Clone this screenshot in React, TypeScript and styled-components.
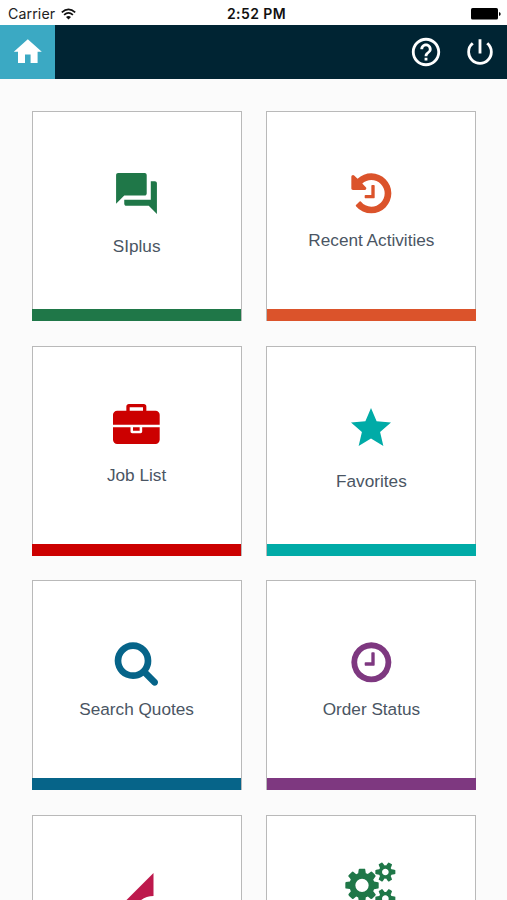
import React from "react";
import styled, { createGlobalStyle } from "styled-components";
import { MdForum, MdHelpOutline, MdHome, MdPowerSettingsNew, MdStar } from "react-icons/md";

const GlobalStyle = createGlobalStyle`
  body { margin: 0; background: #fbfbfb; overflow: hidden; }
`;

const Screen = styled.div`
  width: 507px;
  height: 900px;
  overflow: hidden;
  background: #fbfbfb;
  font-family: "Liberation Sans", Arial, sans-serif;
`;

const StatusBar = styled.div`
  height: 25px;
  box-sizing: border-box;
  padding: 2px 6px 0 8px;
  display: grid;
  grid-template-columns: 219px 1fr auto;
  align-items: center;
  background: #fff;
  color: #111;
  font-family: Inter, sans-serif;
  line-height: 22px;
`;

const Carrier = styled.div`
  display: flex;
  align-items: center;
  gap: 6px;
  color: #222;
  font-size: 14.2px;
  letter-spacing: 0.1px;
`;

const Time = styled.div`
  font-weight: 600;
  font-size: 14px;
  letter-spacing: 0.4px;
`;

const BatterySlot = styled.div`
  display: flex;
  justify-content: flex-end;
`;

const NavBar = styled.header`
  height: 54px;
  display: flex;
  justify-content: space-between;
  background: #002433;
  color: #fff;
`;

const HomeButton = styled.button`
  width: 55px;
  height: 54px;
  padding: 0;
  border: 0;
  display: flex;
  align-items: center;
  justify-content: center;
  background: #3ba9c3;
  color: #fff;
`;

const NavActions = styled.div`
  display: flex;
  align-items: center;
  gap: 20px;
  padding-right: 10px;
`;

const Grid = styled.main`
  display: grid;
  grid-template-columns: 210px 210px;
  grid-auto-rows: 210px;
  gap: 24.5px 24.8px;
  padding: 32px 0 0 31.6px;
`;

const Card = styled.section<{ $accent: string; $top: number }>`
  box-sizing: border-box;
  border: 1px solid #b9b9b9;
  border-bottom: 0;
  padding-top: ${(p) => p.$top}px;
  display: flex;
  flex-direction: column;
  align-items: center;
  background: #fff;
  color: ${(p) => p.$accent};

  svg { display: block; flex: none; overflow: visible; }
`;

const AccentBar = styled.div`
  align-self: stretch;
  height: 12px;
  margin: auto -0.5px 0;
  background: currentColor;
`;

const Label = styled.div<{ $gap: number }>`
  margin-top: ${(p) => p.$gap}px;
  font-size: 17.2px;
  line-height: 20px;
  white-space: nowrap;
  color: #4a5563;
`;

const HISTORY =
  "M1664 896q0 156-61 298t-164 245-245 164-298 61q-172 0-327-72.5t-264-204.5q-7-10-6.5-22.5t8.5-20.5l137-138q10-9 25-9 16 2 23 12 73 95 179 147t225 52q104 0 198.5-40.5t163.5-109.5 109.5-163.5 40.5-198.5-40.5-198.5-109.5-163.5-163.5-109.5-198.5-40.5q-98 0-188 35.5t-160 101.5l137 138q31 30 14 69-17 40-59 40h-448q-26 0-45-19t-19-45v-448q0-42 40-59 39-17 69 14l130 129q107-101 244.5-156.5t284.5-55.5q156 0 298 61t245 164 164 245 61 298zm-640-288v448q0 14-9 23t-23 9h-320q-14 0-23-9t-9-23v-64q0-14 9-23t23-9h224v-352q0-14 9-23t23-9h64q14 0 23 9t9 23z";
const CLOCK =
  "M1024 544v448q0 14-9 23t-23 9h-320q-14 0-23-9t-9-23v-64q0-14 9-23t23-9h224v-352q0-14 9-23t23-9h64q14 0 23 9t9 23zm416 352q0-148-73-273t-198-198-273-73-273 73-198 198-73 273 73 273 198 198 273 73 273-73 198-198 73-273zm224 0q0 209-103 385.5t-279.5 279.5-385.5 103-385.5-103-279.5-279.5-103-385.5 103-385.5 279.5-279.5 385.5-103 385.5 103 279.5 279.5 103 385.5z";
const SEARCH =
  "M1216 832q0-185-131.5-316.5t-316.5-131.5-316.5 131.5-131.5 316.5 131.5 316.5 316.5 131.5 316.5-131.5 131.5-316.5zm512 832q0 52-38 90t-90 38q-54 0-90-38l-343-342q-179 124-399 124-143 0-273.5-55.5t-225-150-150-225-55.5-273.5 55.5-273.5 150-225 225-150 273.5-55.5 273.5 55.5 225 150 150 225 55.5 273.5q0 220-124 399l343 343q37 37 37 90z";
const BRIEFCASE =
  "M640 256h512v-128h-512v128zm1152 640v480q0 66-47 113t-113 47h-1472q-66 0-113-47t-47-113v-480h672v160q0 26 19 45t45 19h320q26 0 45-19t19-45v-160h672zm-768 0v128h-256v-128h256zm768-480v384h-1792v-384q0-66 47-113t113-47h352v-160q0-40 28-68t68-28h576q40 0 68 28t28 68v160h352q66 0 113 47t47 113z";
const COGS =
  "M832 896q0-106-75-181t-181-75-181 75-75 181 75 181 181 75 181-75 75-181zm768 512q0-52-38-90t-90-38-90 38-38 90q0 53 37.5 90.5t90.5 37.5 90.5-37.5 37.5-90.5zm0-1024q0-52-38-90t-90-38-90 38-38 90q0 53 37.5 90.5t90.5 37.5 90.5-37.5 37.5-90.5zm-384 421v185q0 10-7 19.5t-16 10.5l-155 24q-11 35-32 76 34 48 90 115 7 11 7 20 0 12-7 19-23 30-82.5 89.5t-78.5 59.5q-11 0-21-7l-115-90q-37 19-77 31-11 108-23 155-7 24-30 24h-186q-11 0-20-7.5t-10-17.5l-23-153q-34-10-75-31l-118 89q-7 7-20 7-11 0-21-8-144-133-144-160 0-9 7-19 10-14 41-53t47-61q-23-44-35-82l-152-24q-10-1-17-9.5t-7-19.5v-185q0-10 7-19.5t16-10.5l155-24q11-35 32-76-34-48-90-115-7-11-7-20 0-12 7-20 22-30 82-89t79-59q11 0 21 7l115 90q34-18 77-32 11-108 23-154 7-24 30-24h186q11 0 20 7.5t10 17.5l23 153q34 10 75 31l118-89q8-7 20-7 11 0 21 8 144 133 144 160 0 8-7 19-12 16-42 54t-45 60q23 48 34 82l152 23q10 2 17 10.5t7 19.5zm640 533v140q0 16-149 31-12 27-30 52 51 113 51 138 0 4-4 7-122 71-124 71-8 0-46-47t-52-68q-20 2-30 2t-30-2q-14 21-52 68t-46 47q-2 0-124-71-4-3-4-7 0-25 51-138-18-25-30-52-149-15-149-31v-140q0-16 149-31 13-29 30-52-51-113-51-138 0-4 4-7 4-2 35-20t59-34 30-16q8 0 46 46.5t52 67.5q20-2 30-2t30 2q51-71 92-112l6-2q4 0 124 70 4 3 4 7 0 25-51 138 17 23 30 52 149 15 149 31zm0-1024v140q0 16-149 31-12 27-30 52 51 113 51 138 0 4-4 7-122 71-124 71-8 0-46-47t-52-68q-20 2-30 2t-30-2q-14 21-52 68t-46 47q-2 0-124-71-4-3-4-7 0-25 51-138-18-25-30-52-149-15-149-31v-140q0-16 149-31 13-29 30-52-51-113-51-138 0-4 4-7 4-2 35-20t59-34 30-16q8 0 46 46.5t52 67.5q20-2 30-2t30 2q51-71 92-112l6-2q4 0 124 70 4 3 4 7 0 25-51 138 17 23 30 52 149 15 149 31z";

const Glyph = ({ d, wide = 1792 }: { d: string; wide?: number }) => (
  <svg width={(wide * 46.7) / 1792} height={46.7} viewBox={`0 0 ${wide} 1792`} fill="currentColor">
    <path d={d} />
  </svg>
);

const Wifi = () => (
  <svg width="15" height="12" viewBox="0 0 15 12" fill="none" stroke="#111" strokeWidth="1.7">
    <path d="M0.8 4.3Q7.5 -1.7 14.2 4.3" />
    <path d="M3.1 6.8Q7.5 2.9 11.9 6.8" />
    <path d="M5 8.9Q7.5 6.9 10 8.9L7.5 11.5Z" fill="#111" stroke="none" />
  </svg>
);

const Battery = () => (
  <svg width="30" height="12" viewBox="0 0 30 12" fill="#000">
    <rect x="0" y="0" width="27" height="11.6" rx="1.6" />
    <path d="M28 4q1.7 .4 1.7 2t-1.7 2z" />
  </svg>
);

const Signal = () => (
  <svg width="48" height="48" viewBox="0 0 48 48" fill="currentColor">
    <path d="M40.5 4V27Q33 27 27.5 31.5L16 48H-3.5Z" />
  </svg>
);

const tiles = [
  { label: "SIplus", accent: "#1f7748", top: 57.2, gap: 17.9, icon: <MdForum size={49} /> },
  { label: "Recent Activities", accent: "#db532b", top: 57.6, gap: 13.8, icon: <Glyph d={HISTORY} /> },
  { label: "Job List", accent: "#cc0000", top: 57.6, gap: 14.1, icon: <Glyph d={BRIEFCASE} /> },
  { label: "Favorites", accent: "#00aba7", top: 57.5, gap: 18.9, icon: <MdStar size={48} /> },
  { label: "Search Quotes", accent: "#066489", top: 57.6, gap: 13.7, icon: <Glyph d={SEARCH} /> },
  { label: "Order Status", accent: "#7e3880", top: 57.6, gap: 13.7, icon: <Glyph d={CLOCK} /> },
  { label: "", accent: "#bd194c", top: 53.5, gap: 14, icon: <Signal /> },
  { label: "", accent: "#1f7748", top: 46.5, gap: 14, icon: <Glyph d={COGS} wide={1856} /> },
];

export default function App() {
  return (
    <Screen>
      <GlobalStyle />
      <StatusBar>
        <Carrier>Carrier <Wifi /></Carrier>
        <Time>2:52 PM</Time>
        <BatterySlot><Battery /></BatterySlot>
      </StatusBar>
      <NavBar>
        <HomeButton aria-label="Home"><MdHome size={33.6} /></HomeButton>
        <NavActions>
          <MdHelpOutline size={34} />
          <MdPowerSettingsNew size={34} />
        </NavActions>
      </NavBar>
      <Grid>
        {tiles.map((t, i) => (
          <Card key={i} $accent={t.accent} $top={t.top}>
            {t.icon}
            {t.label && <Label $gap={t.gap}>{t.label}</Label>}
            <AccentBar />
          </Card>
        ))}
      </Grid>
    </Screen>
  );
}
